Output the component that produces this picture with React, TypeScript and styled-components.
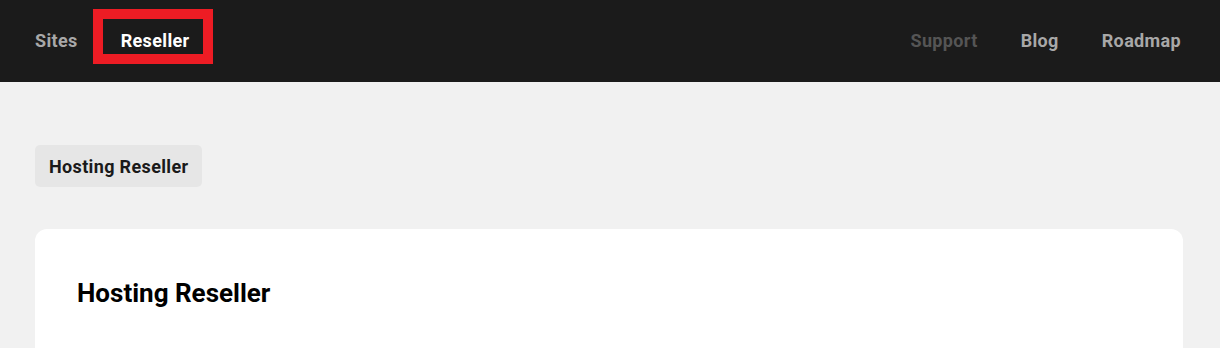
import React, { ReactElement } from "react";
import styled, { createGlobalStyle } from "styled-components";

const colors = {
  header: "#1b1b1b",
  page: "#f1f1f1",
  pill: "#e6e6e6",
  white: "#ffffff",
  muted: "#a8a8a8",
  dim: "#555555",
  red: "#ed1c24",
  ink: "#1a1a1a"
};

const GlobalStyle = createGlobalStyle`
  html, body {
    margin: 0;
    padding: 0;
    background: ${colors.page};
    font-family: Roboto, "Liberation Sans", Arial, sans-serif;
  }
`;

const Header = styled.header`
  display: flex;
  align-items: center;
  justify-content: space-between;
  height: 82px;
  padding: 0 39px 0 35px;
  background: ${colors.header};
`;

const Nav = styled.nav`
  display: flex;
  align-items: center;
  gap: 43px;
`;

const NavLink = styled.a<{ $active?: boolean; $dim?: boolean }>`
  position: relative;
  font-size: 18px;
  font-weight: 700;
  letter-spacing: 0.35px;
  line-height: 20px;
  text-decoration: none;
  color: ${p => (p.$active ? colors.white : p.$dim ? colors.dim : colors.muted)};

  ${p =>
    p.$active &&
    `
    &::after {
      content: "";
      position: absolute;
      left: -28px;
      right: -23px;
      top: -22px;
      bottom: -13px;
      border: 10px solid ${colors.red};
    }
  `}
`;

const Main = styled.main`
  display: flex;
  flex-direction: column;
  align-items: flex-start;
  gap: 42px;
  padding: 63px 37px 0 35px;
`;

const Pill = styled.div`
  display: flex;
  align-items: center;
  height: 42px;
  padding: 0 14px;
  border-radius: 5px;
  background: ${colors.pill};
  color: ${colors.ink};
  font-size: 18px;
  font-weight: 700;
  letter-spacing: 0.35px;
  box-sizing: border-box;
`;

const Card = styled.section`
  align-self: stretch;
  min-height: 200px;
  padding: 49px 42px;
  border-radius: 12px;
  background: ${colors.white};
`;

const Title = styled.h1`
  margin: 0;
  font-size: 26px;
  font-weight: 700;
  color: #000;
`;

function App(): ReactElement {
  return (
    <>
      <GlobalStyle />
      <Header>
        <Nav>
          <NavLink>Sites</NavLink>
          <NavLink $active>Reseller</NavLink>
        </Nav>
        <Nav>
          <NavLink $dim>Support</NavLink>
          <NavLink>Blog</NavLink>
          <NavLink>Roadmap</NavLink>
        </Nav>
      </Header>
      <Main>
        <Pill>Hosting Reseller</Pill>
        <Card>
          <Title>Hosting Reseller</Title>
        </Card>
      </Main>
    </>
  );
}

export default App;
